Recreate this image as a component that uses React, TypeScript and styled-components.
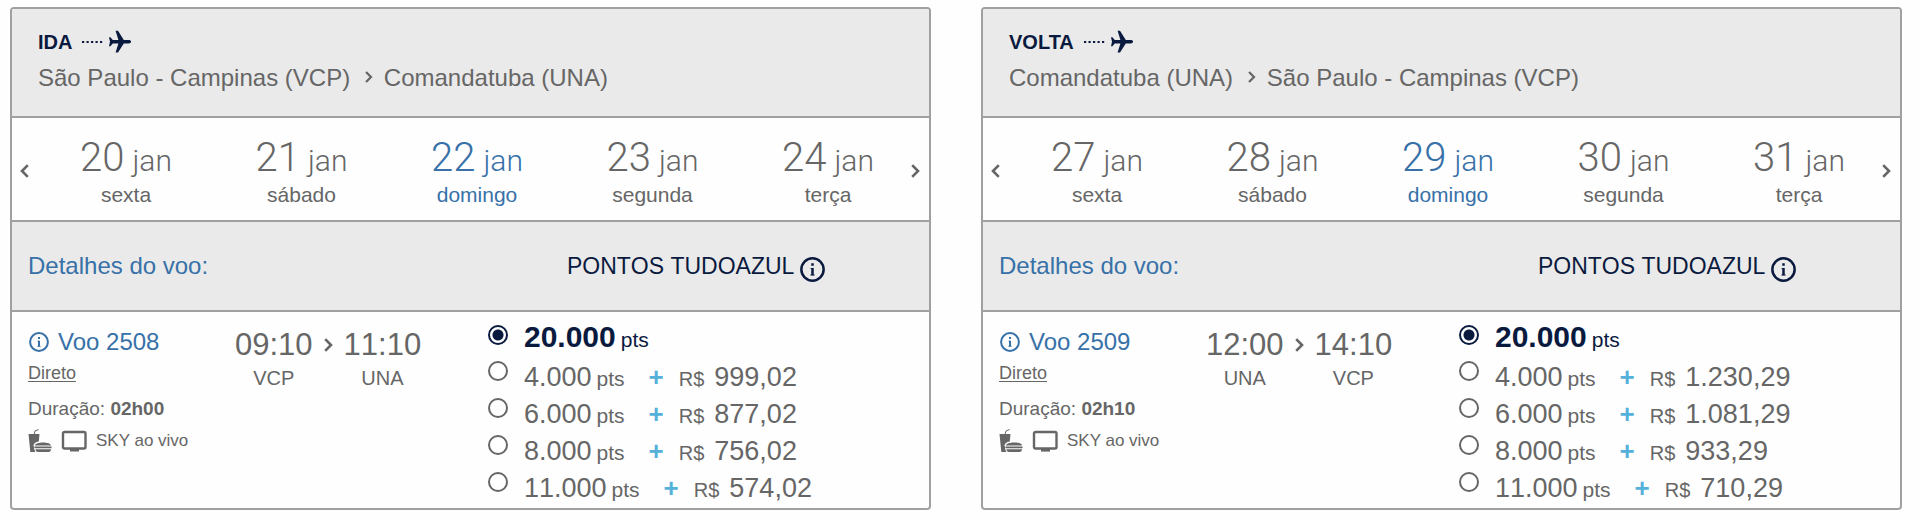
import React, { useState } from "react";
import styled, { createGlobalStyle } from "styled-components";

const color = {
  text: "#666666",
  blue: "#3771a8",
  navy: "#0a1a3f",
  sky: "#55b0da",
  line: "#a0a0a0",
  shade: "#eaeaea",
};

const GlobalStyle = createGlobalStyle`
  * { box-sizing: border-box; }
  body {
    margin: 0;
    background: #fefefe;
    color: ${color.text};
    font-family: "Liberation Sans", Arial, sans-serif;
  }
  button { font: inherit; color: inherit; background: none; border: 0; padding: 0; cursor: pointer; }
`;

const Page = styled.main`
  display: grid;
  grid-template-columns: 1fr 1fr;
  gap: 50px;
  padding: 7px 18px 9px 10px;
`;

const Panel = styled.section`
  border: 2px solid ${color.line};
  border-radius: 4px;
  background: #fefefe;
  overflow: hidden;
`;

const PanelHeader = styled.header`
  padding: 19px 26px 23px;
  background: ${color.shade};
  border-bottom: 2px solid ${color.line};
`;

const Direction = styled.h2`
  display: flex;
  align-items: center;
  gap: 10px;
  margin: 0;
  height: 28px;
  font-size: 20px;
  line-height: 28px;
  color: ${color.navy};
`;

const Route = styled.p`
  display: flex;
  align-items: center;
  margin: 0;
  padding-top: 7px;
  font-size: 24px;
  line-height: 30px;
`;

const RouteArrow = styled.span`
  display: flex;
  padding: 0 11px 3px 15px;
`;

const DateBar = styled.nav`
  display: flex;
  align-items: stretch;
  height: 104px;
  border-bottom: 2px solid ${color.line};
`;

const ArrowButton = styled.button<{ $side: "left" | "right" }>`
  display: flex;
  align-items: center;
  flex: none;
  width: ${(p) => (p.$side === "left" ? 64 : 51)}px;
  padding: 4px 9px 0 8px;
  justify-content: ${(p) => (p.$side === "left" ? "flex-start" : "flex-end")};
`;

const Dates = styled.div`
  display: flex;
  flex: 1;
  justify-content: space-between;
`;

const DateButton = styled.button<{ $active: boolean }>`
  display: flex;
  flex-direction: column;
  align-items: center;
  width: 100px;
  padding-top: 18px;
  color: ${(p) => (p.$active ? color.blue : color.text)};
`;

const DayMonth = styled.span`
  display: flex;
  align-items: baseline;
  gap: 8px;
  font-family: Roboto, "Liberation Sans", sans-serif;
  font-weight: 300;
  font-size: 30px;
  line-height: 44px;
  white-space: nowrap;
`;

const DayNumber = styled.span`
  font-size: 40px;
`;

const Weekday = styled.span`
  font-size: 21px;
  line-height: 24px;
`;

const columns = "minmax(0, 477fr) minmax(0, 442fr)";

const DetailBar = styled.div`
  display: grid;
  grid-template-columns: ${columns};
  align-items: center;
  height: 90px;
  background: ${color.shade};
  border-bottom: 2px solid ${color.line};
`;

const DetailLink = styled.a`
  justify-self: start;
  padding-left: 16px;
  color: ${color.blue};
  font-size: 24px;
  text-decoration: none;
`;

const FareTitle = styled.div`
  display: flex;
  align-items: center;
  gap: 6px;
  padding-left: 79px;
  color: ${color.navy};
  font-size: 23px;
  font-kerning: none;
`;

const InfoButton = styled.button`
  display: flex;
  padding-top: 7px;
`;

const Body = styled.div`
  display: grid;
  grid-template-columns: ${columns};
`;

const Flight = styled.div`
  display: flex;
  padding: 14px 0 0 16px;
`;

const FlightInfo = styled.div`
  width: 207px;
  font-size: 18px;
`;

const FlightNumber = styled.a`
  display: flex;
  align-items: center;
  gap: 9px;
  padding-left: 1px;
  color: ${color.blue};
  font-size: 24px;
  line-height: 32px;
  text-decoration: none;
`;

const Stops = styled.a`
  display: block;
  width: max-content;
  padding-top: 1px;
  color: inherit;
  line-height: 28px;
  text-underline-offset: 2px;
`;

const Duration = styled.p`
  margin: 0;
  padding-top: 8px;
  font-size: 19px;
  line-height: 28px;
`;

const Amenities = styled.div`
  display: flex;
  align-items: center;
  gap: 9px;
  padding-top: 4px;
  font-size: 17px;
  line-height: 28px;
`;

const Times = styled.div`
  display: flex;
  gap: 11px;
`;

const TimeArrow = styled.span`
  display: flex;
  align-items: center;
  height: 37px;
`;

const Stop = styled.div`
  display: flex;
  flex-direction: column;
  align-items: center;
  font-size: 20px;
  line-height: 28px;
`;

const Clock = styled.time`
  font-size: 31px;
  line-height: 38px;
  font-kerning: none;
`;

const Fares = styled.div`
  display: flex;
  flex-direction: column;
  padding: 6px 0 2px;
`;

const FareRow = styled.label<{ $first: boolean }>`
  display: flex;
  align-items: baseline;
  height: ${(p) => (p.$first ? 40 : 37)}px;
  line-height: 38px;
  font-kerning: none;
  cursor: pointer;
`;

const Radio = styled.input<{ $first: boolean }>`
  appearance: none;
  align-self: flex-start;
  flex: none;
  width: 20px;
  height: 20px;
  margin: ${(p) => (p.$first ? 7 : 3)}px 16px 0 0;
  border: 2px solid ${color.text};
  border-radius: 50%;
  background: #ffffff;
  &:checked {
    border-color: ${color.navy};
    background: radial-gradient(circle, ${color.navy} 5px, #ffffff 6px);
  }
`;

const Points = styled.span<{ $strong: boolean }>`
  font-size: ${(p) => (p.$strong ? 30 : 27)}px;
  font-weight: ${(p) => (p.$strong ? 700 : 400)};
  color: ${(p) => (p.$strong ? color.navy : color.text)};
`;

const Unit = styled.span<{ $strong: boolean }>`
  padding-left: 5px;
  font-size: 21px;
  color: ${(p) => (p.$strong ? color.navy : color.text)};
`;

const Plus = styled.span`
  padding: 0 15px 0 24px;
  color: ${color.sky};
  font-size: 26px;
  font-weight: 700;
`;

const Currency = styled.span`
  padding-right: 10px;
  font-size: 20px;
`;

const Amount = styled.span`
  font-size: 27px;
`;

const Chevron = ({ dir = "right", size = 14 }: { dir?: "left" | "right"; size?: number }) => (
  <svg width={(size * 9) / 14} height={size} viewBox="0 0 9 14" fill="none" stroke="currentColor" strokeWidth="2.6" aria-hidden="true">
    <path d={dir === "right" ? "M1.2 1.2 7 7l-5.8 5.8" : "M7.8 1.2 2 7l5.8 5.8"} />
  </svg>
);

const InfoIcon = ({ size }: { size: number }) => (
  <svg width={size} height={size} viewBox="0 0 24 24" fill="none" stroke="currentColor" strokeWidth="2.4" aria-hidden="true">
    <circle cx="12" cy="12" r="10.7" />
    <path d="M12 10.500v7M12 6v2.500" />
    <path d="M10.200 11h1.800M10 17.200h4" strokeWidth="1" />
  </svg>
);

const PlaneIcon = () => (
  <svg width="49" height="26" viewBox="0 0 49 26" fill="currentColor" aria-hidden="true">
    <path d="M0 13h21" stroke="currentColor" strokeWidth="2" strokeDasharray="2.200 2.300" />
    <path d="M27 8.200h1.400l2.400 2.700h5.600L33.600 1.800h2.400l5.800 9.100h5c3 0 3 3.600 0 3.600h-5l-5.800 9.100h-2.400l2.800-9.100h-5.600l-2.400 2.700H27l1-4.500z" />
  </svg>
);

const SnackIcon = () => (
  <svg width="24" height="24" viewBox="0 0 24 24" fill="currentColor" aria-hidden="true">
    <path d="M6 5.500 7 2l3.500-1.500" fill="none" stroke="currentColor" strokeWidth="1" />
    <path d="M.5 5h11l-.7 7.600c-3.300.6-5.200 2-5.400 4.400l1 1-.6 1 1.500 4H2.300z" />
    <path d="M7 16.500c0-4 16-4 16 0zM6.500 17.600h17v1.600h-17zM7.500 20.300H23c0 1.800-1 2.700-2.500 2.700H10c-1.500 0-2.500-.9-2.500-2.700z" />
  </svg>
);

const ScreenIcon = () => (
  <svg width="26" height="22" viewBox="0 0 26 22" fill="none" stroke="currentColor" strokeWidth="2.4" aria-hidden="true">
    <rect x="2" y="2" width="22.500" height="16.500" rx="1.500" />
    <path d="M9 20.200h9" strokeWidth="2.800" />
  </svg>
);

type Trip = {
  id: string;
  title: string;
  from: string;
  to: string;
  days: [string, string][];
  flight: string;
  duration: string;
  depart: [string, string];
  arrive: [string, string];
  fares: [string, string?][];
};

const trips: Trip[] = [
  {
    id: "ida",
    title: "IDA",
    from: "São Paulo - Campinas (VCP)",
    to: "Comandatuba (UNA)",
    days: [["20", "sexta"], ["21", "sábado"], ["22", "domingo"], ["23", "segunda"], ["24", "terça"]],
    flight: "Voo 2508",
    duration: "02h00",
    depart: ["09:10", "VCP"],
    arrive: ["11:10", "UNA"],
    fares: [["20.000"], ["4.000", "999,02"], ["6.000", "877,02"], ["8.000", "756,02"], ["11.000", "574,02"]],
  },
  {
    id: "volta",
    title: "VOLTA",
    from: "Comandatuba (UNA)",
    to: "São Paulo - Campinas (VCP)",
    days: [["27", "sexta"], ["28", "sábado"], ["29", "domingo"], ["30", "segunda"], ["31", "terça"]],
    flight: "Voo 2509",
    duration: "02h10",
    depart: ["12:00", "UNA"],
    arrive: ["14:10", "VCP"],
    fares: [["20.000"], ["4.000", "1.230,29"], ["6.000", "1.081,29"], ["8.000", "933,29"], ["11.000", "710,29"]],
  },
];

function TripPanel({ trip }: { trip: Trip }) {
  const [day, setDay] = useState(2);
  const [fare, setFare] = useState(0);
  return (
    <Panel>
      <PanelHeader>
        <Direction>
          {trip.title}
          <PlaneIcon />
        </Direction>
        <Route>
          {trip.from}
          <RouteArrow><Chevron size={12} /></RouteArrow>
          {trip.to}
        </Route>
      </PanelHeader>
      <DateBar aria-label="Datas">
        <ArrowButton $side="left" aria-label="Datas anteriores"><Chevron dir="left" /></ArrowButton>
        <Dates>
          {trip.days.map(([number, weekday], i) => (
            <DateButton key={number} $active={i === day} onClick={() => setDay(i)}>
              <DayMonth><DayNumber>{number}</DayNumber>jan</DayMonth>
              <Weekday>{weekday}</Weekday>
            </DateButton>
          ))}
        </Dates>
        <ArrowButton $side="right" aria-label="Próximas datas"><Chevron /></ArrowButton>
      </DateBar>
      <DetailBar>
        <DetailLink href="#detalhes">Detalhes do voo:</DetailLink>
        <FareTitle>
          PONTOS TUDOAZUL
          <InfoButton aria-label="Sobre os pontos"><InfoIcon size={25} /></InfoButton>
        </FareTitle>
      </DetailBar>
      <Body>
        <Flight>
          <FlightInfo>
            <FlightNumber href="#voo"><InfoIcon size={20} />{trip.flight}</FlightNumber>
            <Stops href="#paradas">Direto</Stops>
            <Duration>Duração: <b>{trip.duration}</b></Duration>
            <Amenities><SnackIcon /><ScreenIcon />SKY ao vivo</Amenities>
          </FlightInfo>
          <Times>
            <Stop><Clock>{trip.depart[0]}</Clock>{trip.depart[1]}</Stop>
            <TimeArrow><Chevron size={14} /></TimeArrow>
            <Stop><Clock>{trip.arrive[0]}</Clock>{trip.arrive[1]}</Stop>
          </Times>
        </Flight>
        <Fares role="radiogroup" aria-label="Pontos TudoAzul">
          {trip.fares.map(([points, amount], i) => (
            <FareRow key={points} $first={i === 0}>
              <Radio type="radio" name={trip.id} $first={i === 0} checked={i === fare} onChange={() => setFare(i)} />
              <Points $strong={i === fare}>{points}</Points>
              <Unit $strong={i === fare}>pts</Unit>
              {amount && (
                <>
                  <Plus>+</Plus>
                  <Currency>R$</Currency>
                  <Amount>{amount}</Amount>
                </>
              )}
            </FareRow>
          ))}
        </Fares>
      </Body>
    </Panel>
  );
}

export default function App() {
  return (
    <>
      <GlobalStyle />
      <Page>
        {trips.map((trip) => <TripPanel key={trip.id} trip={trip} />)}
      </Page>
    </>
  );
}
